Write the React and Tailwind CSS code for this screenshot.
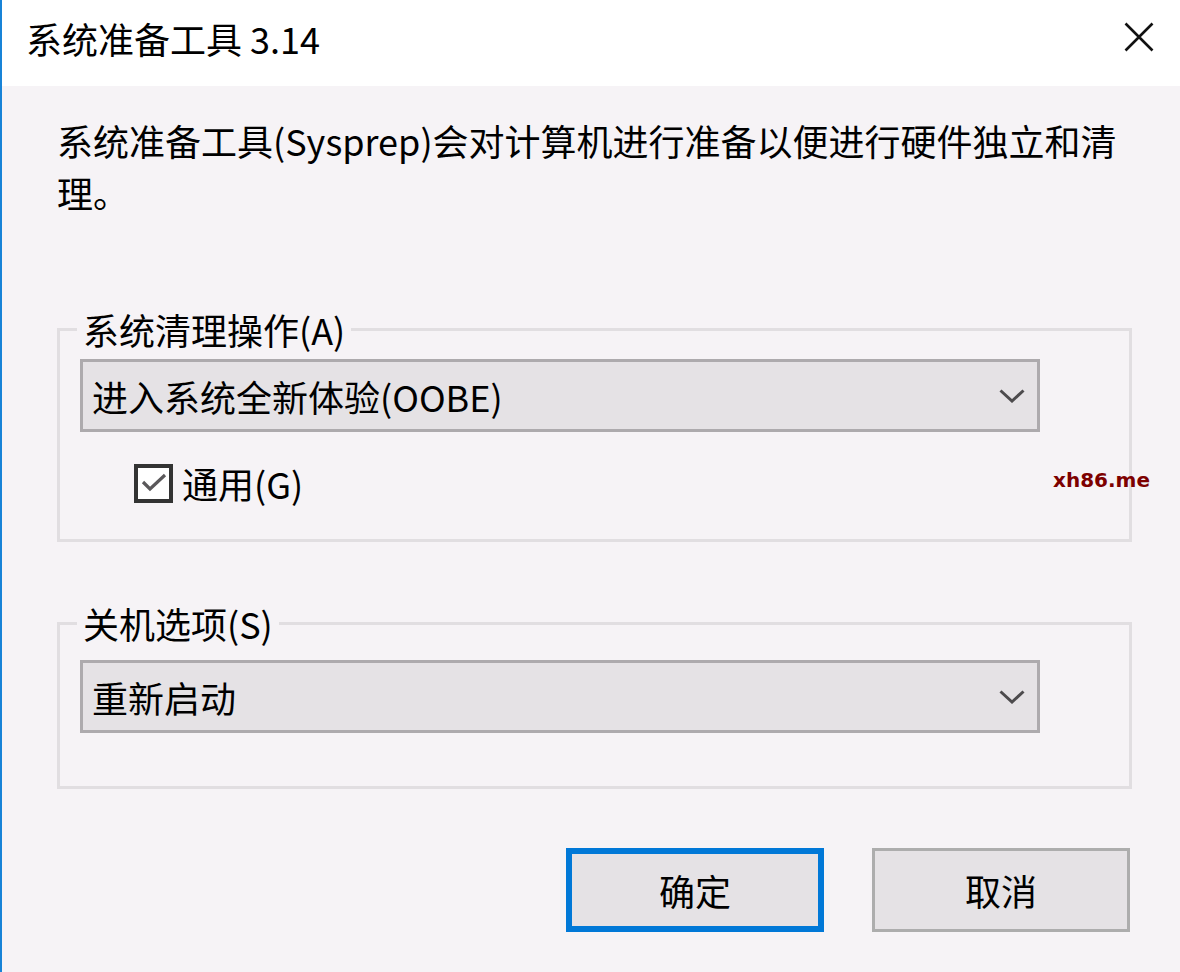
import React from 'react';

const font = { fontFamily: '"Noto Sans CJK SC", "Noto Sans", sans-serif' };

function Chevron() {
  return (
    <svg width="26" height="14" viewBox="0 0 26 14" className="shrink-0">
      <path d="M1.5 1.5 L13 12 L24.5 1.5" fill="none" stroke="#4d4b4d" strokeWidth="3" />
    </svg>
  );
}

function Combo({ label }) {
  return (
    <div className="w-[960px] h-[73px] border-[3px] border-[#adaaad] bg-[#e5e2e5] flex items-center justify-between pl-[9px] pr-[12px]">
      <span className="text-[36px] leading-[40px] text-black whitespace-nowrap">{label}</span>
      <Chevron />
    </div>
  );
}

export default function App() {
  return (
    <div
      className="relative w-[1180px] h-[972px] border-l-2 border-[#1883d7] bg-[#f6f3f6] flex flex-col overflow-hidden"
      style={font}
    >
      {/* title bar */}
      <div className="h-[86px] bg-white flex items-start justify-between pl-[24px] pr-[26px] pt-[18px] shrink-0">
        <span className="text-[36px] leading-[40px] text-black whitespace-nowrap">系统准备工具 3.14</span>
        <svg width="30" height="30" viewBox="0 0 30 30" className="mt-[4px]">
          <path d="M1.5 1.5 L28.5 28.5 M28.5 1.5 L1.5 28.5" stroke="#111" strokeWidth="2.6" />
        </svg>
      </div>

      <div className="flex flex-col pl-[55px]">
        <p className="pt-[28px] text-[36px] leading-[52px] text-black whitespace-nowrap">
          系统准备工具(Sysprep)会对计算机进行准备以便进行硬件独立和清
          <br />
          理。
        </p>

        <fieldset className="mt-[91px] w-[1075px] border-[3px] border-[#e1dee1] px-[20px] pt-[10px] pb-[36px]">
          <legend className="-ml-[3px] px-[6px] text-[36px] leading-[40px] text-black whitespace-nowrap">系统清理操作(A)</legend>
          <Combo label="进入系统全新体验(OOBE)" />
          <div className="mt-[31px] ml-[54px] flex items-center gap-[9px]">
            <div className="w-[39px] h-[39px] border-[4px] border-[#333333] bg-white flex items-center justify-center">
              <svg width="26" height="20" viewBox="0 0 26 20">
                <path d="M2 9 L9 16 L24 2" fill="none" stroke="#5a585a" strokeWidth="3.2" />
              </svg>
            </div>
            <span className="text-[36px] leading-[40px] text-black whitespace-nowrap">通用(G)</span>
          </div>
        </fieldset>

        <fieldset className="mt-[61px] w-[1075px] border-[3px] border-[#e1dee1] px-[20px] pt-[17px] pb-[53px]">
          <legend className="-ml-[3px] px-[6px] text-[36px] leading-[40px] text-black whitespace-nowrap">关机选项(S)</legend>
          <Combo label="重新启动" />
        </fieldset>

        <div className="mt-[59px] flex justify-end gap-[48px] pr-[50px]">
          <button className="w-[258px] h-[84px] border-[6px] border-[#0078d7] bg-[#e5e2e5] text-[36px] leading-[40px] text-black">
            确定
          </button>
          <button className="w-[258px] h-[84px] border-[3px] border-[#adadad] bg-[#e5e2e5] text-[36px] leading-[40px] text-black">
            取消
          </button>
        </div>
      </div>

      {/* watermark */}
      <span
        className="absolute left-[1051px] top-[466px] text-[20px] leading-[28px] font-bold text-[#7d0000]"
        style={{ fontFamily: '"DejaVu Sans", sans-serif' }}
      >
        xh86.me
      </span>
    </div>
  );
}
